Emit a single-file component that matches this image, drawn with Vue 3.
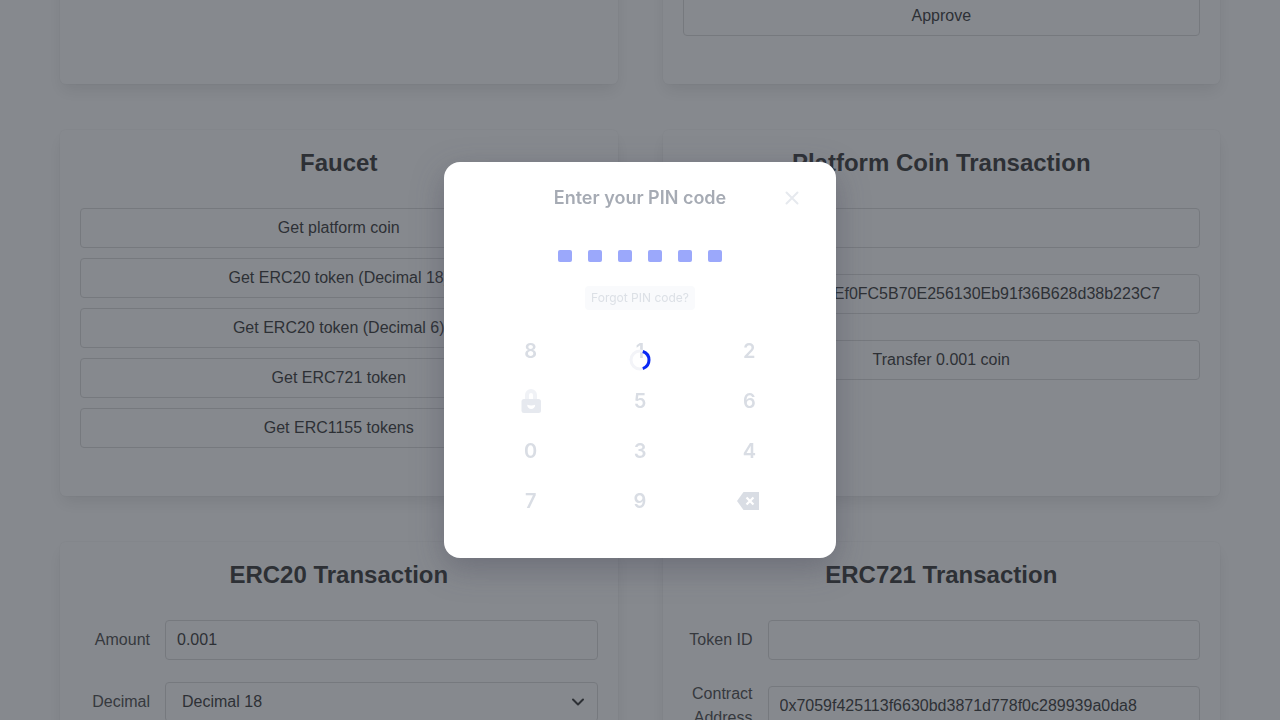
<script setup>
import { ref } from 'vue'

const faucets = [
  'Get platform coin',
  'Get ERC20 token (Decimal 18)',
  'Get ERC20 token (Decimal 6)',
  'Get ERC721 token',
  'Get ERC1155 tokens',
]
const keys = ['8', '1', '2', 'lock', '5', '6', '0', '3', '4', '7', '9', 'delete']
const coinAmount = ref('')
const receiver = ref('0xA790Ef0FC5B70E256130Eb91f36B628d38b223C7')
const amount = ref('0.001')
const decimal = ref('18')
const tokenId = ref('')
const contract = ref('0x7059f425113f6630bd3871d778f0c289939a0da8')
</script>

<template>
  <div class="page">
    <main class="cards">
      <section class="card"></section>
      <section class="card">
        <button class="btn">Approve</button>
      </section>

      <section class="card">
        <h2>Faucet</h2>
        <div class="buttons">
          <button v-for="f in faucets" :key="f" class="btn">{{ f }}</button>
        </div>
      </section>

      <section class="card">
        <h2>Platform Coin Transaction</h2>
        <div class="form">
          <div class="field">
            <label for="coin-amount">Amount</label>
            <input id="coin-amount" v-model="coinAmount" type="text" />
          </div>
          <div class="field">
            <label for="receiver">Contract Address</label>
            <input id="receiver" v-model="receiver" type="text" />
          </div>
          <button class="btn">Transfer 0.001 coin</button>
        </div>
      </section>

      <section class="card">
        <h2>ERC20 Transaction</h2>
        <div class="form">
          <div class="field">
            <label for="amount">Amount</label>
            <input id="amount" v-model="amount" type="text" />
          </div>
          <div class="field">
            <label for="decimal">Decimal</label>
            <div class="select">
              <select id="decimal" v-model="decimal">
                <option value="18">Decimal 18</option>
              </select>
              <svg viewBox="0 0 16 16" width="16" height="16" aria-hidden="true">
                <path d="M3 5.5l5 5 5-5" fill="none" stroke="#363636" stroke-width="2" stroke-linecap="round" stroke-linejoin="round" />
              </svg>
            </div>
          </div>
        </div>
      </section>

      <section class="card">
        <h2>ERC721 Transaction</h2>
        <div class="form">
          <div class="field">
            <label for="token-id">Token ID</label>
            <input id="token-id" v-model="tokenId" type="text" />
          </div>
          <div class="field">
            <label for="contract">Contract Address</label>
            <input id="contract" v-model="contract" type="text" />
          </div>
        </div>
      </section>
    </main>

    <div class="overlay">
      <div class="modal" role="dialog" aria-labelledby="pin-title">
        <header>
          <h1 id="pin-title">Enter your PIN code</h1>
          <button class="close" aria-label="Close">
            <svg viewBox="0 0 24 24" width="24" height="24">
              <path d="M6.5 6.5l11 11M17.5 6.5l-11 11" fill="none" stroke="#e6e9ee" stroke-width="2" stroke-linecap="round" />
            </svg>
          </button>
        </header>
        <div class="dots">
          <span v-for="n in 6" :key="n" class="dot"></span>
        </div>
        <button class="forgot">Forgot PIN code?</button>
        <div class="keypad">
          <template v-for="k in keys" :key="k">
            <div v-if="k === 'lock'" class="key">
              <svg viewBox="0 0 24 24" width="24" height="24" aria-hidden="true">
                <path d="M8 11V6a4 4 0 0 1 8 0v5" fill="none" stroke="#f0f2f6" stroke-width="4" />
                <rect x="2.5" y="10" width="19.5" height="14" rx="2.5" fill="#e6e9ef" />
                <path d="M8.200 15.700q4 1.500 8 0a4 4.300 0 0 1-8 0z" fill="#fff" />
              </svg>
            </div>
            <button v-else-if="k === 'delete'" class="key" aria-label="Delete">
              <svg viewBox="0 0 24 24" width="24" height="24">
                <path d="M6.500 3H22v18H6.500L0 12z" fill="#d9dde4" />
                <path d="M10.300 9.300l5.400 5.400M15.700 9.300l-5.400 5.400" stroke="#fff" stroke-width="2.200" stroke-linecap="square" />
              </svg>
            </button>
            <button v-else class="key">{{ k }}</button>
          </template>
        </div>
        <svg class="spinner" viewBox="0 0 24 24" width="24" height="24" aria-hidden="true">
          <circle cx="12" cy="12" r="9" fill="none" stroke="#f3f4f8" stroke-width="3" />
          <path d="M14.800 3.450a9 9 0 0 1 0 17.100" fill="none" stroke="#0a28f5" stroke-width="3" />
        </svg>
      </div>
    </div>
  </div>
</template>

<style>
body {
  overflow: hidden;
}
</style>

<style scoped>
* {
  box-sizing: border-box;
}
.page {
  height: 100vh;
  overflow: hidden;
  background: #fff;
  color: #4a4a4a;
  font: 16px/24px "Liberation Sans", Arial, sans-serif;
}
.cards {
  display: grid;
  grid-template-columns: 1fr 1fr;
  gap: 46px 45px;
  padding: 0 60px;
  margin-top: -24px;
}
.card {
  padding: 20px 20px 48px;
  border-radius: 6px;
  background: #fff;
  box-shadow: 0 8px 16px -2px rgba(10, 10, 10, 0.1), 0 0 0 1px rgba(10, 10, 10, 0.02);
}
h2 {
  margin: 0 0 33px;
  color: #363636;
  font-size: 24px;
  line-height: 25px;
  text-align: center;
}
button,
input,
select {
  font: inherit;
}
.btn,
input,
select {
  display: block;
  width: 100%;
  height: 40px;
  min-width: 0;
  border: 1px solid #dbdbdb;
  border-radius: 4px;
  background: #fff;
  color: #363636;
}
.buttons {
  display: grid;
  gap: 10px;
}
.form {
  display: grid;
  gap: 22px;
}
.field {
  display: grid;
  grid-template-columns: 70px 1fr;
  column-gap: 15px;
  align-items: center;
}
label {
  text-align: right;
}
input {
  padding: 0 11px;
}
.select {
  position: relative;
}
select {
  appearance: none;
  padding: 0 16px;
}
.select svg {
  position: absolute;
  right: 12px;
  top: 12px;
}
.overlay {
  position: fixed;
  inset: 0;
  display: flex;
  align-items: center;
  justify-content: center;
  background: rgba(39, 45, 54, 0.56);
}
.modal {
  position: relative;
  display: flex;
  flex-direction: column;
  align-items: center;
  width: 392px;
  padding: 24px 32px 32px;
  border-radius: 16px;
  background: #fff;
  box-shadow: 0 10px 32px rgba(65, 66, 85, 0.38);
  font-family: Inter, sans-serif;
}
header {
  display: grid;
  grid-template-columns: 24px 1fr 24px;
  align-self: stretch;
}
h1 {
  grid-column: 2;
  margin: 0;
  color: #a6abb4;
  font-size: 18px;
  font-weight: 600;
  line-height: 24px;
  text-align: center;
}
.close,
.key,
.forgot {
  padding: 0;
  border: 0;
  background: none;
}
.close svg,
.key svg {
  display: block;
}
.dots {
  display: flex;
  gap: 16px;
  margin: 40px 0 24px;
}
.dot {
  width: 14px;
  height: 12px;
  border-radius: 2px;
  background: #9ba8fb;
}
.forgot {
  width: 110px;
  border-radius: 4px;
  background: #f9fafc;
  color: #dce0e6;
  font-size: 12px;
  font-weight: 400;
  line-height: 24px;
}
.keypad {
  display: grid;
  grid-template-columns: repeat(3, 1fr);
  grid-auto-rows: 50px;
  align-self: stretch;
  margin-top: 16px;
}
.key {
  display: flex;
  align-items: center;
  justify-content: center;
  color: #d9dde4;
  font-size: 20px;
  font-weight: 600;
}
.spinner {
  position: absolute;
  top: calc(50% - 12px);
  left: calc(50% - 12px);
}
</style>
